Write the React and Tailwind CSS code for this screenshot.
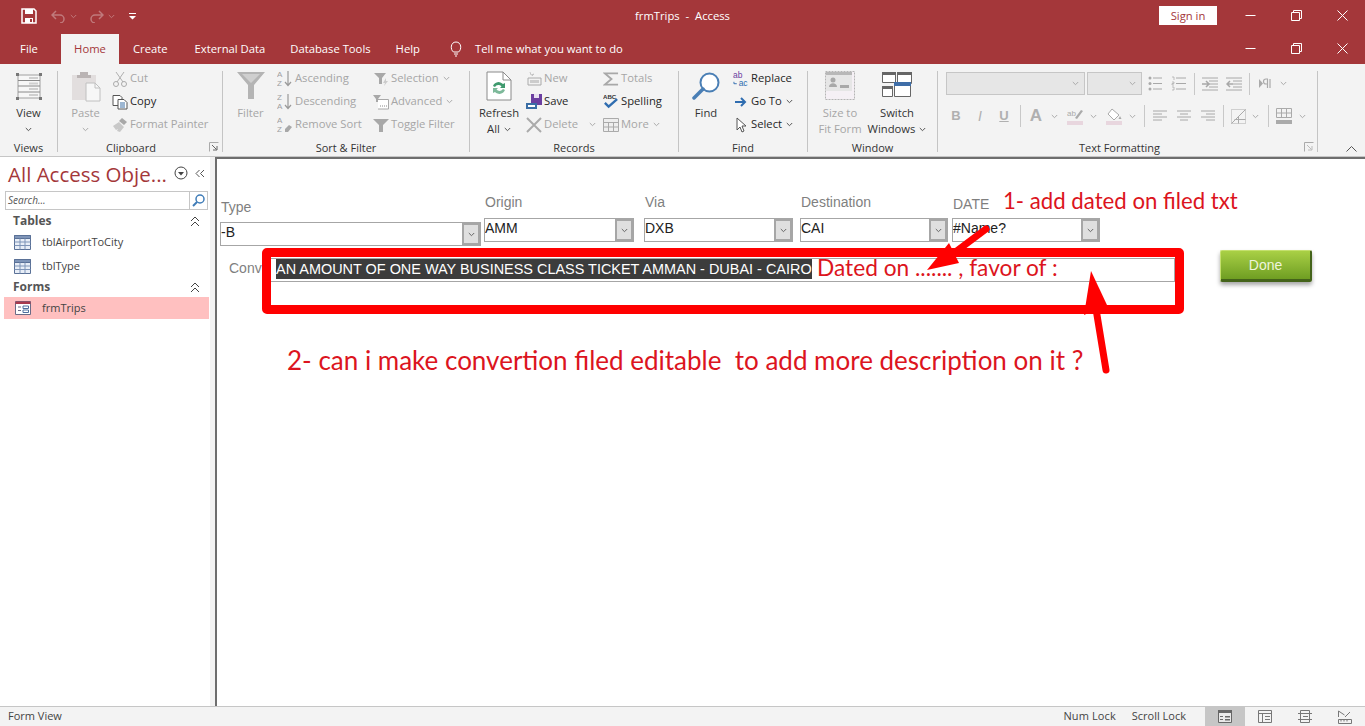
import React from "react";

const ui = { fontFamily: '"Open Sans", "Noto Sans", sans-serif' };

const Chev = ({ c = "#8a8a8a", className = "" }) => (
  <svg width="7" height="5" viewBox="0 0 7 5" className={className}>
    <path d="M.8 1l2.7 2.700L6.200 1" fill="none" stroke={c} strokeWidth="1" />
  </svg>
);

const Sep = () => <div className="w-px bg-[#c4c4c4] mt-[4px] mb-[4px] shrink-0" />;

const Launcher = ({ c = "#666" }) => (
  <svg width="10" height="10" viewBox="0 0 10 10" className="absolute right-[3px] bottom-[4px]">
    <path d="M.5 9.500v-9h9" fill="none" stroke="#aaa" />
    <path d="M3 3l4.500 4.500M8 4v4H4" fill="none" stroke={c} />
  </svg>
);

const Group = ({ label, width, children, launcher, launcherColor, labelPad = "" }) => (
  <div className={`relative flex flex-col shrink-0 ${width}`}>
    <div className="flex h-[73px]">{children}</div>
    <div className={`h-[16px] leading-[16px] text-center text-[11px] text-[#333] ${labelPad}`}>{label}</div>
    {launcher && <Launcher c={launcherColor} />}
  </div>
);

const Big = ({ icon, lines, off, width, chev, under }) => (
  <div className={`flex flex-col items-center shrink-0 ${width}`}>
    <div className="h-[38px] flex items-center justify-center">{icon}</div>
    {lines.map((l, i) => (
      <div key={i} className={`h-[16px] leading-[16px] text-[11.25px] whitespace-nowrap flex items-center gap-[4px] ${off ? "text-[#a6a6a6]" : "text-[#333]"}`}>
        {l}
        {chev && i === lines.length - 1 && <Chev c={off ? "#aaa" : "#555"} />}
      </div>
    ))}
    {under && (
      <div className="h-[16px] flex items-center">
        <Chev c={off ? "#aaa" : "#555"} />
      </div>
    )}
  </div>
);

const Small = ({ icon, text, off, chev }) => (
  <div className={`h-[23px] flex items-center whitespace-nowrap text-[11.25px] gap-[2px] ${off ? "text-[#a6a6a6]" : "text-[#262626]"}`}>
    <span className="w-[16px] h-[16px] flex items-center justify-center shrink-0">{icon}</span>
    <span>{text}</span>
    {chev && <Chev className="ml-[2px]" c={off ? "#aaa" : "#555"} />}
  </div>
);

const S = ({ children, w = 16, h = 16, vb }) => (
  <svg width={w} height={h} viewBox={vb || `0 0 ${w} ${h}`}>{children}</svg>
);

const ViewIcon = () => (
  <S w={26} h={27}>
    <path d="M2 2h22v23H2z" fill="#f7f7f7" stroke="#a0a0a0" />
    <path d="M2 7.500h22M2 13h22M2 19h22" stroke="#8a8a8a" />
    <path d="M13 4h9v2h-9zM13 9.500h9v2h-9zM13 15h9v2h-9zM13 21h9v2h-9z" fill="#cfcfcf" />
    <path d="M0 0h3v3H0zM23 0h3v3h-3zM0 24h3v3H0zM23 24h3v3h-3z" fill="#777" />
  </S>
);

const PasteIcon = () => (
  <S w={30} h={31}>
    <path d="M1 4h24v25H1z" fill="#e2dede" />
    <path d="M9 1h8v3h3v3H6V4h3z" fill="#bab4b4" />
    <path d="M15 12h9l5 5v13H15z" fill="#f7f7f7" stroke="#c0c0c0" />
    <path d="M24 12v5h5" fill="none" stroke="#c0c0c0" />
  </S>
);

const Funnel = ({ w = 28, h = 28 }) => (
  <S w={w} h={h} vb="0 0 28 28">
    <path d="M0 0h28L17 13v14h-6V13z" fill="#b4b4b4" />
    <path d="M5 2h18l-9 9z" fill="#cfcfcf" />
  </S>
);

const SortIcon = ({ a, b, tail }) => (
  <svg width="16" height="17" viewBox="0 0 16 17">
    <text x="0" y="7" fontSize="8" fontFamily="Liberation Sans" fill="#a0a0a0">{a}</text>
    <text x="0" y="15.500" fontSize="8" fontFamily="Liberation Sans" fill="#a0a0a0">{b}</text>
    {tail ? <path d="M8 13l4-4 3 2-4 5H8z" fill="#a8a8a8" /> : <path d="M11 1v14M8 12l3 3.500 3-3.500" fill="none" stroke="#9a9a9a" strokeWidth="1.200" />}
  </svg>
);

const TableIcon = () => (
  <svg width="17" height="15" viewBox="0 0 17 15">
    <path d="M.5.5h16v14H.5z" fill="#e8eef7" stroke="#5a7197" />
    <path d="M.5.5h16v3H.5z" fill="#7f95b8" stroke="#5a7197" />
    <path d="M.5 7h16M.5 10.500h16M6 3.500v11M11 3.500v11" stroke="#7f95b8" />
  </svg>
);

const FormIcon = () => (
  <svg width="16" height="14" viewBox="0 0 16 14">
    <path d="M.5.5h15v13H.5z" fill="#fff" stroke="#6b6b86" />
    <path d="M.5.5h15v2.500H.5z" fill="#a8394d" />
    <path d="M3 6h3M3 9.500h3" stroke="#6b6b86" />
    <path d="M8 5h5.500v2.500H8zM8 9h5.500v2.500H8z" fill="#fff" stroke="#4e6e9e" />
  </svg>
);

const WinBtns = () => (
  <div className="flex items-center">
    <div className="w-[46px] flex justify-center">
      <svg width="11" height="11" viewBox="0 0 11 11"><path d="M.5 5.500h10" stroke="#fff" /></svg>
    </div>
    <div className="w-[46px] flex justify-center">
      <svg width="11" height="11" viewBox="0 0 11 11"><path d="M.5 2.500h8v8h-8zM2.500 2.500V.5h8v8h-2" fill="none" stroke="#fff" /></svg>
    </div>
    <div className="w-[46px] flex justify-center">
      <svg width="11" height="11" viewBox="0 0 11 11"><path d="M.5.5l10 10M10.500.5l-10 10" stroke="#fff" /></svg>
    </div>
  </div>
);

const Slot = ({ w, children }) => <div className={`flex items-center justify-center shrink-0 ${w}`}>{children}</div>;
const VLine = () => <div className="w-px h-[22px] bg-[#c8c8c8] shrink-0" />;

const LinesIcon = ({ kind }) => (
  <svg width="16" height="14" viewBox="0 0 16 14" stroke="#a8a8a8">
    {kind === "left" && <path d="M1 2h14M1 5h9M1 8h14M1 11h9" />}
    {kind === "center" && <path d="M1 2h14M4 5h8M1 8h14M4 11h8" />}
    {kind === "right" && <path d="M1 2h14M6 5h9M1 8h14M6 11h9" />}
    {kind === "in" && <><path d="M0 1h16M7 4h9M7 7h9M7 10h9M0 13h16" /><path d="M0 7h6M4 4l3 3-3 3" fill="none" strokeWidth="1.500" /></>}
    {kind === "out" && <><path d="M0 1h16M7 4h9M7 7h9M7 10h9M0 13h16" /><path d="M1 7h6M4 4L1 7l3 3" fill="none" strokeWidth="1.500" /></>}
  </svg>
);

const Combo = ({ value, width }) => (
  <div className={`flex border border-[#a6a6a6] bg-white h-[24px] ${width}`}>
    <div className="flex-1 text-[14px] leading-[18px] text-[#222] whitespace-nowrap overflow-hidden">{value}</div>
    <div className="w-[18px] bg-[#dfdfdf] border-2 border-[#a6a6a6] flex items-center justify-center">
      <Chev c="#666" />
    </div>
  </div>
);

const Field = ({ label, value, width, ml = "", labelMb = "mb-[8px]", mt = "" }) => (
  <div className={`shrink-0 ${ml} ${mt}`}>
    <div className={`text-[14px] leading-[16px] text-[#7f7f7f] pl-[1px] ${labelMb}`}>{label}</div>
    <Combo value={value} width={width} />
  </div>
);

const Ribbon = () => (
  <div className="flex h-[93px] bg-[#f3f3f3] border-b border-[#c6c6c6] pt-[3px] shrink-0 relative">
    <Group label="Views" width="w-[57px]">
      <Big icon={<ViewIcon />} lines={["View"]} width="w-full" under />
    </Group>
    <Sep />
    <Group label="Clipboard" width="w-[164px]" launcher labelPad="pr-[18px]">
      <Big icon={<PasteIcon />} lines={["Paste"]} off width="w-[53px] ml-[1px]" under />
      <div>
        <Small off text="Cut" icon={<S><path d="M4 1l7 10M12 1L5 11" stroke="#b0b0b0" fill="none" /><circle cx="4" cy="13" r="2.500" fill="none" stroke="#aaa" /><circle cx="12" cy="13" r="2.500" fill="none" stroke="#aaa" /></S>} />
        <Small text="Copy" icon={<S><path d="M1 1.500h7l2 2v8H1z" fill="#fff" stroke="#555" /><path d="M6 5.500h6l3 3v6.500H6z" fill="#fff" stroke="#555" /><path d="M8 9h5M8 11h5M8 13h5" stroke="#3a6ea5" /></S>} />
        <Small off text="Format Painter" icon={<S><path d="M10 1l5 4-3 3-5-4z" fill="#a8a8a8" /><path d="M1 9l6-4 5 5-4 5-3-1 1-2-2 1z" fill="#c8c8c8" /></S>} />
      </div>
    </Group>
    <Sep />
    <Group label="Sort & Filter" width="w-[246px]">
      <Big icon={<Funnel />} lines={["Filter"]} off width="w-[53px] ml-[1px]" />
      <div className="w-[96px]">
        <Small off text="Ascending" icon={<SortIcon a="A" b="Z" />} />
        <Small off text="Descending" icon={<SortIcon a="Z" b="A" />} />
        <Small off text="Remove Sort" icon={<SortIcon a="A" b="Z" tail />} />
      </div>
      <div>
        <Small off text="Selection" chev icon={<S><path d="M1 2h12L9 7v6H6V7z" fill="#a8a8a8" /><path d="M13 7l-3 5h2l-1 3 4-5h-2z" fill="#ccc" /></S>} />
        <Small off text="Advanced" chev icon={<S><path d="M0 1h8L5 5v3H3V5z" fill="#a8a8a8" /><path d="M5 5.500h10.500v9.500H5" fill="#fff" stroke="#a8a8a8" /><path d="M7 12h7" stroke="#888" strokeDasharray="1 1" /></S>} />
        <Small off text="Toggle Filter" icon={<S><path d="M0 2h16L10 8v7H6V8z" fill="#a8a8a8" /></S>} />
      </div>
    </Group>
    <Sep />
    <Group label="Records" width="w-[208px]">
      <Big
        width="w-[58px]"
        lines={["Refresh", "All"]}
        chev
        icon={
          <S w={26} h={30}>
            <path d="M1 1h16l8 8v20H1z" fill="#fff" stroke="#8a8a8a" />
            <path d="M17 1v8h8" fill="none" stroke="#8a8a8a" />
            <path d="M7 15a6 6 0 0 1 10-2l2-1v5h-5l1.500-1.500A4 4 0 0 0 9 16z" fill="#3f9a6e" />
            <path d="M19 19a6 6 0 0 1-10 2l-2 1v-5h5l-1.500 1.500A4 4 0 0 0 17 18z" fill="#7db99a" />
          </S>
        }
      />
      <div className="w-[77px] ml-[-2px]">
        <Small off text="New" icon={<S><path d="M2 7h13v7H2z" fill="#f2f2f2" stroke="#aaa" /><path d="M4 9h9v3H4z" fill="#ccc" /><path d="M4 1l1 3 3-1-2 2" stroke="#c5c5c5" fill="none" /></S>} />
        <Small text="Save" icon={<S><path d="M5 0h11v11H5z" fill="#6b3fa0" /><path d="M8 0h5v4H8z" fill="#e8e0f0" /><path d="M0 9h11v6H0z" fill="#3a6ea5" /><path d="M2 11h7v2H2z" fill="#fff" /></S>} />
        <div className="flex items-center">
          <Small off text="Delete" icon={<S><path d="M1 1l14 14M15 1L1 15" stroke="#aaa" strokeWidth="2" /></S>} />
          <Chev c="#aaa" className="ml-[11px]" />
        </div>
      </div>
      <div>
        <Small off text="Totals" icon={<S w={17} h={16}><path d="M15 3V2H2l7 6-7 6h13v-1" fill="none" stroke="#a8a8a8" strokeWidth="2" /></S>} />
        <Small
          text="Spelling"
          icon={
            <svg width="17" height="17" viewBox="0 0 17 17">
              <text x="0" y="6" fontSize="6.500" fontWeight="700" fontFamily="Liberation Sans" fill="#333">ABC</text>
              <path d="M2 10l4 4 9-8" fill="none" stroke="#2f6db0" strokeWidth="2.500" />
            </svg>
          }
        />
        <Small off text="More" chev icon={<S><path d="M.5 1.500h15v13H.5z" fill="#eee" stroke="#aaa" /><path d="M.5 5.500h15M.5 10h15M5.500 5.500v9M10.500 5.500v9" stroke="#aaa" /></S>} />
      </div>
    </Group>
    <Sep />
    <Group label="Find" width="w-[128px]">
      <Big
        width="w-[54px]"
        lines={["Find"]}
        icon={
          <S w={28} h={28}>
            <circle cx="17.500" cy="10.500" r="9" fill="#fff" stroke="#4a7fb5" strokeWidth="2" />
            <path d="M11 17L2 26" stroke="#4a7fb5" strokeWidth="3.500" strokeLinecap="round" />
          </S>
        }
      />
      <div>
        <Small
          text="Replace"
          icon={
            <svg width="17" height="16" viewBox="0 0 17 16">
              <text x="0" y="7" fontSize="9" fontFamily="Liberation Sans" fill="#6b3fa0">ab</text>
              <text x="6" y="15" fontSize="9" fontFamily="Liberation Sans" fill="#2f6db0">ac</text>
              <path d="M1 11v2h3" fill="none" stroke="#2f6db0" />
            </svg>
          }
        />
        <Small text="Go To" chev icon={<S><path d="M2 8h10M8 4l4 4-4 4" fill="none" stroke="#2f6db0" strokeWidth="2" /></S>} />
        <Small text="Select" chev icon={<S><path d="M4 1v12l3-3 2 5 2-1-2-5h4z" fill="#fff" stroke="#555" /></S>} />
      </div>
    </Group>
    <Sep />
    <Group label="Window" width="w-[129px]">
      <Big
        off
        width="w-[64px]"
        lines={["Size to", "Fit Form"]}
        icon={
          <S w={30} h={30}>
            <path d="M.5.5h29v28H.5z" fill="#f5f0f5" stroke="#b5b5b5" strokeDasharray="2 1" />
            <path d="M1 1h26v19H1z" fill="#e6e6e6" />
            <path d="M1 1h26v3H1z" fill="#b8b8b8" />
            <circle cx="8" cy="9" r="2.500" fill="#a8a8a8" />
            <path d="M4 16c0-5 8-5 8 0zM15 14h9v3h-9z" fill="#a8a8a8" />
          </S>
        }
      />
      <Big
        width="w-[50px]"
        lines={["Switch", "Windows"]}
        chev
        icon={
          <S w={30} h={28}>
            <path d="M.5.5h13v10H.5zM15.500.5h14v11h-14zM.5 14.500h10v10H.5z" fill="#fff" stroke="#666" />
            <path d="M0 0h14v3H0zM15 0h15v3H15zM0 14h11v3H0z" fill="#666" />
            <path d="M12.500 10.500h16v14h-16z" fill="#fff" stroke="#666" />
            <path d="M12 10h17v4H12z" fill="#3f6ea8" />
          </S>
        }
      />
    </Group>
    <Sep />
    <Group label="Text Formatting" width="w-[379px]" launcher launcherColor="#bbb" labelPad="pr-[16px]">
      <div className="pl-[8px] pt-[5px]">
        <div className="flex items-center h-[23px]">
          <div className="w-[139px] h-[23px] bg-[#e6e6e6] border border-[#c6c6c6] flex items-center justify-end pr-[5px]"><Chev c="#aaa" /></div>
          <div className="w-[55px] h-[23px] ml-[2px] bg-[#e6e6e6] border border-[#c6c6c6] flex items-center justify-end pr-[5px]"><Chev c="#aaa" /></div>
          <Slot w="w-[21px] ml-[2px]">
            <svg width="14" height="15" viewBox="0 0 14 15" stroke="#a8a8a8"><path d="M5 2h9M5 7.500h9M5 13h9" /><circle cx="2" cy="2" r="1.500" fill="#aaa" stroke="none" /><circle cx="2" cy="7.500" r="1.500" fill="#aaa" stroke="none" /><circle cx="2" cy="13" r="1.500" fill="#aaa" stroke="none" /></svg>
          </Slot>
          <Slot w="w-[26px]">
            <svg width="15" height="15" viewBox="0 0 15 15" stroke="#a8a8a8"><path d="M5 2h10M5 7.500h10M5 13h10" /><path d="M1 1h2v3M1 6h2v1.500H1V9h2M1 11h2v3H1" fill="none" strokeWidth=".700" /></svg>
          </Slot>
          <Slot w="w-[6px]"><VLine /></Slot>
          <Slot w="w-[26px]"><LinesIcon kind="in" /></Slot>
          <Slot w="w-[22px]"><LinesIcon kind="out" /></Slot>
          <Slot w="w-[8px]"><VLine /></Slot>
          <Slot w="w-[24px]">
            <svg width="13" height="11" viewBox="0 0 13 11"><path d="M0 1l4 4.500L0 10z" fill="#aaa" /><path d="M9 1H7a2.500 2.500 0 0 0 0 5h1M8.500 1v9M11 1v9" fill="none" stroke="#aaa" strokeWidth="1.200" /></svg>
          </Slot>
          <Slot w="w-[12px]"><Chev c="#aaa" /></Slot>
        </div>
        <div className="flex items-center h-[30px] mt-[6px] text-[#b0b0b0]" style={{ fontFamily: '"Liberation Sans", sans-serif' }}>
          <Slot w="w-[20px] font-bold text-[13px]">B</Slot>
          <Slot w="w-[28px] italic text-[14px]">I</Slot>
          <Slot w="w-[20px] underline font-bold text-[13px]">U</Slot>
          <Slot w="w-[12px]"><VLine /></Slot>
          <Slot w="w-[20px] font-bold text-[17px]">A</Slot>
          <Slot w="w-[16px]"><Chev c="#aaa" /></Slot>
          <Slot w="w-[26px]">
            <svg width="16" height="17" viewBox="0 0 16 17"><text x="0" y="8" fontSize="8" fontFamily="Liberation Sans" fill="#aaa">ab</text><path d="M8 10l6-8 2 1-6 8z" fill="#aaa" /><path d="M0 13h16v4H0z" fill="#e8d6de" /></svg>
          </Slot>
          <Slot w="w-[10px]"><Chev c="#aaa" /></Slot>
          <Slot w="w-[24px] ml-[4px]">
            <svg width="16" height="17" viewBox="0 0 16 17"><path d="M6 1l7 6-5 5-6-6z" fill="#fff" stroke="#aaa" /><path d="M14 8l1.500 3h-3z" fill="#aaa" /><path d="M0 13h16v4H0z" fill="#e8d6de" /></svg>
          </Slot>
          <Slot w="w-[12px]"><Chev c="#aaa" /></Slot>
          <Slot w="w-[12px]"><VLine /></Slot>
          <Slot w="w-[20px]"><LinesIcon kind="left" /></Slot>
          <Slot w="w-[28px]"><LinesIcon kind="center" /></Slot>
          <Slot w="w-[20px]"><LinesIcon kind="right" /></Slot>
          <Slot w="w-[10px]"><VLine /></Slot>
          <Slot w="w-[20px]">
            <svg width="15" height="15" viewBox="0 0 15 15" stroke="#aaa" fill="none"><path d="M.5.5h14v14H.5z" strokeDasharray="1 1" /><path d="M.5 14.500l14-14M7.500 7.500v7M3.500 10.500h11" /></svg>
          </Slot>
          <Slot w="w-[14px]"><Chev c="#aaa" /></Slot>
          <Slot w="w-[12px]"><VLine /></Slot>
          <Slot w="w-[20px]">
            <svg width="16" height="16" viewBox="0 0 16 16" fill="none" stroke="#aaa"><path d="M.5.5h15v9H.5zM.5 5h15M5.500.5v9M10.500.5v9" /><path d="M0 12h16v4H0z" fill="#aaa" stroke="none" /></svg>
          </Slot>
          <Slot w="w-[16px]"><Chev c="#aaa" /></Slot>
        </div>
      </div>
    </Group>
    <Sep />
    <svg width="11" height="6" viewBox="0 0 11 6" className="absolute right-[8px] bottom-[4px]">
      <path d="M.5 5.500l5-5 5 5" fill="none" stroke="#555" />
    </svg>
  </div>
);

const NavRow = ({ icon, text, active }) => (
  <div className={`flex items-center ${active ? "bg-[#ffc0c0] mr-[1px] ml-[4px] h-[22px] pl-[10px] mt-[1px]" : "h-[24px] pl-[14px]"}`}>
    <span className="w-[17px] flex justify-center shrink-0">{icon}</span>
    <span className="ml-[11px] text-[11px] text-[#444]">{text}</span>
  </div>
);

const NavHead = ({ text }) => (
  <div className="flex items-center justify-between h-[18px] pl-[13px] pr-[10px] text-[12px] font-bold text-[#555]">
    {text}
    <svg width="10" height="11" viewBox="0 0 10 11"><path d="M1 5l4-4 4 4M1 10l4-4 4 4" fill="none" stroke="#444" /></svg>
  </div>
);

const Nav = () => (
  <div className="w-[210px] shrink-0 bg-white flex flex-col">
    <div className="flex items-center h-[35px] pl-[8px]">
      <span className="text-[20.500px] text-[#a4373a] whitespace-nowrap w-[166px]">All Access Obje...</span>
      <svg width="14" height="14" viewBox="0 0 14 14" className="mb-[3px]"><circle cx="7" cy="7" r="6" fill="none" stroke="#444" /><path d="M4 6h6L7 9.500z" fill="#444" /></svg>
      <svg width="10" height="9" viewBox="0 0 10 9" className="ml-[7px] mb-[3px]"><path d="M4.500 1L1 4.500 4.500 8M9 1L5.500 4.500 9 8" fill="none" stroke="#555" /></svg>
    </div>
    <div className="flex h-[19px] ml-[5px] mr-[2px] border border-[#c6c6c6] mt-[-1px]">
      <div className="flex-1 italic text-[10px] leading-[17px] pl-[2px] text-[#555]">Search...</div>
      <div className="w-[18px] border-l border-[#c6c6c6] flex items-center justify-center">
        <svg width="13" height="13" viewBox="0 0 13 13"><circle cx="8" cy="5" r="4" fill="none" stroke="#3f7cb8" strokeWidth="1.500" /><path d="M5 8l-4 4" stroke="#3f7cb8" strokeWidth="2" /></svg>
      </div>
    </div>
    <div className="pt-[2px]">
      <NavHead text="Tables" />
      <NavRow icon={<TableIcon />} text="tblAirportToCity" />
      <NavRow icon={<TableIcon />} text="tblType" />
      <NavHead text="Forms" />
      <NavRow active icon={<FormIcon />} text="frmTrips" />
    </div>
  </div>
);

const note = { fontFamily: "Lato, sans-serif" };

const Annotations = () => (
  <>
    <div className="absolute left-[786px] top-[27px] text-[22.200px] leading-[30px] text-[#dc1420] whitespace-nowrap" style={note}>1- add dated on filed txt</div>
    <div className="absolute left-[600px] top-[94px] text-[22.700px] leading-[30px] text-[#dc1420] whitespace-nowrap" style={note}>Dated on ....... , favor of :</div>
    <div className="absolute left-[70px] top-[185px] text-[26px] leading-[32px] text-[#dc1420] whitespace-pre" style={note}>2- can i make convertion filed editable  to add more description on it ?</div>
    <div className="absolute left-[45px] top-[89px] w-[922px] h-[66px] border-[9px] border-[#ff0000] rounded-[5px]" />
    <svg width="1148" height="547" viewBox="0 0 1148 547" className="absolute left-0 top-0 pointer-events-none">
      <path d="M769 70L737 94" stroke="#ff0000" strokeWidth="7" strokeLinecap="round" />
      <path d="M710 111L732 84L742 104z" fill="#ff0000" />
      <path d="M889 211L879 150" stroke="#ff0000" strokeWidth="7" strokeLinecap="round" />
      <path d="M874 112L867 156L890 146z" fill="#ff0000" />
    </svg>
  </>
);

const FormArea = () => (
  <div className="relative flex-1 bg-white border-l-2 border-t-2 border-[#6e6e6e] overflow-hidden" style={{ fontFamily: '"Liberation Sans", Arial, sans-serif' }}>
    <div className="flex items-start pt-[35px] pl-[3px]">
      <Field label="Type" value="-B" width="w-[261px]" mt="mt-[5px]" labelMb="mb-[7px]" />
      <Field label="Origin" value="AMM" width="w-[150px]" ml="ml-[3px]" />
      <Field label="Via" value="DXB" width="w-[149px]" ml="ml-[10px]" />
      <Field label="Destination" value="CAI" width="w-[148px]" ml="ml-[7px]" />
      <Field label="DATE" value="#Name?" width="w-[148px]" ml="ml-[4px]" mt="mt-[2px]" labelMb="mb-[6px]" />
    </div>
    <div className="flex items-start mt-[12px] pl-[12px]">
      <div className="w-[41px] text-[14px] leading-[20px] text-[#7f7f7f] overflow-hidden shrink-0">Conv</div>
      <div className="w-[905px] h-[24px] border border-[#a6a6a6] pl-[5px] text-[14.450px] shrink-0">
        <span className="block bg-[#3c3c3c] text-white w-[536px] h-[20px] leading-[20px] whitespace-nowrap overflow-hidden">AN AMOUNT OF ONE WAY BUSINESS CLASS TICKET AMMAN - DUBAI - CAIRO</span>
      </div>
      <div className="ml-[45px] mt-[-8px] w-[92px] h-[32px] flex items-center justify-center text-[14px] text-[#eef4dc] rounded-[2px] bg-gradient-to-b from-[#a9d045] to-[#6f9e22] border-t border-l border-[#c4e06e] border-b-[3px] border-b-[#44631a] border-r-2 border-r-[#44631a] shadow-[0_3px_4px_rgba(0,0,0,.35)]">Done</div>
    </div>
    <Annotations />
  </div>
);

export default function App() {
  return (
    <div className="w-[1365px] h-[726px] flex flex-col overflow-hidden bg-[#f3f3f3]" style={ui}>
      <div className="h-[34px] bg-[#a4373a] flex items-center text-white text-[11.250px] shrink-0 relative">
        <div className="pl-[21px] pb-[2px] flex items-center">
          <svg width="16" height="16" viewBox="0 0 16 16"><path d="M1 1h12l2 2v12H1z" fill="none" stroke="#fff" strokeWidth="1.500" /><path d="M4 1h8v5H4zM4 10h8v5H4z" fill="#fff" /><path d="M9 11h2v3H9z" fill="#a4373a" /></svg>
          <svg width="15" height="13" viewBox="0 0 15 13" className="ml-[14px]"><path d="M5 1L1 5l4 4M1 5h8a4 4 0 0 1 0 8" fill="none" stroke="#c07a7c" strokeWidth="1.500" /></svg>
          <Chev c="#c07a7c" className="ml-[4px]" />
          <svg width="15" height="13" viewBox="0 0 15 13" className="ml-[12px]"><path d="M10 1l4 4-4 4M14 5H6a4 4 0 0 0 0 8" fill="none" stroke="#c07a7c" strokeWidth="1.500" /></svg>
          <Chev c="#c07a7c" className="ml-[4px]" />
          <svg width="7" height="7" viewBox="0 0 7 7" className="ml-[14px]"><path d="M0 0h7v1H0zM0 3h7L3.500 6.500z" fill="#fff" /></svg>
        </div>
        <div className="absolute left-0 right-0 top-0 h-[32px] flex items-center justify-center pointer-events-none">frmTrips&nbsp; -&nbsp; Access</div>
        <div className="ml-auto flex items-center pb-[4px]">
          <div className="w-[58px] h-[19px] bg-white text-[#a4373a] text-center leading-[19px] mr-[10px]">Sign in</div>
          <WinBtns />
        </div>
      </div>
      <div className="h-[30px] bg-[#a4373a] flex items-stretch text-white text-[11.250px] shrink-0">
        <div className="w-[61px] pr-[3px] flex items-center justify-center">File</div>
        <div className="w-[58px] bg-[#f3f3f3] text-[#a4373a] flex items-center justify-center">Home</div>
        <div className="flex items-center ml-[14px]">Create</div>
        <div className="flex items-center ml-[27px]">External Data</div>
        <div className="flex items-center ml-[25px]">Database Tools</div>
        <div className="flex items-center ml-[25px]">Help</div>
        <div className="flex items-center ml-[29px]">
          <svg width="14" height="16" viewBox="0 0 14 16"><path d="M4.500 11C1 8.500 1.500 1 7 1s6 7.500 2.500 10zM5 13h4M6 15h2" fill="none" stroke="#fff" /></svg>
          <span className="ml-[12px]">Tell me what you want to do</span>
        </div>
        <div className="ml-auto flex items-center pb-[2px]"><WinBtns /></div>
      </div>
      <Ribbon />
      <div className="flex flex-1 min-h-0">
        <Nav />
        <div className="w-[5px] bg-[#f3f3f3] shrink-0" />
        <FormArea />
      </div>
      <div className="h-[20px] bg-[#f3f3f3] border-t border-[#c6c6c6] flex items-stretch text-[11px] text-[#444] shrink-0">
        <div className="pl-[8px] flex items-center">Form View</div>
        <div className="ml-auto flex items-center pr-[16px] tracking-[.1px]">Num Lock</div>
        <div className="flex items-center pr-[19px]">Scroll Lock</div>
        <div className="w-[40px] bg-[#c6c6c6] flex items-center justify-center">
          <svg width="14" height="13" viewBox="0 0 14 13"><path d="M.5.5h13v12H.5z" fill="#e8e8e8" stroke="#666" /><path d="M0 0h14v3H0z" fill="#666" /><path d="M2 6h3v1H2zM2 9h3v1H2zM7 6h5v1.500H7zM7 9h5v1.500H7z" fill="#666" /></svg>
        </div>
        <div className="w-[40px] flex items-center justify-center">
          <svg width="14" height="13" viewBox="0 0 14 13" fill="none" stroke="#777"><path d="M.5.5h13v12H.5zM.5 3.500h13M4.500 3.500v9M7 6.500h5M7 9.500h5" /></svg>
        </div>
        <div className="w-[40px] flex items-center justify-center">
          <svg width="14" height="13" viewBox="0 0 14 13" fill="none" stroke="#777"><path d="M2.500.5h9v12h-9zM0 3.500h14M0 9.500h14M5 6.500h5" /></svg>
        </div>
        <div className="w-[40px] flex items-center justify-center">
          <svg width="14" height="14" viewBox="0 0 14 14" fill="none" stroke="#777"><path d="M.5 13.500h13v-4H.5zM3 9.500v2M6 9.500v2M9 9.500v2M.5 1v6M.5 1l6 4M7 7l5-5" /></svg>
        </div>
      </div>
    </div>
  );
}
